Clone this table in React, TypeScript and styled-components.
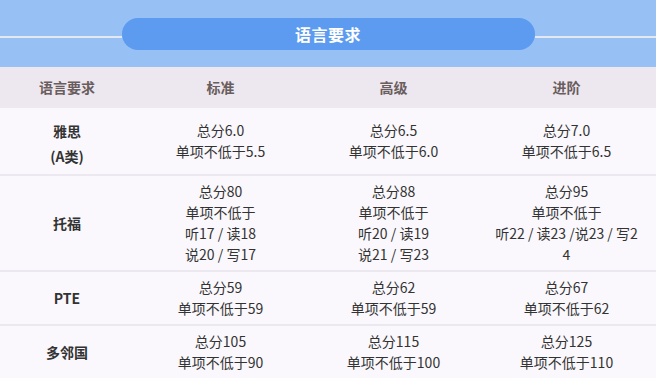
import React from 'react';
import styled, { createGlobalStyle } from 'styled-components';

const GlobalStyle = createGlobalStyle`
	html, body {
		margin: 0;
		padding: 0;
		background: #faf8fc;
		font-family: "Noto Sans CJK SC", "Noto Sans", sans-serif;
		color: #333;
	}
`;

interface Row {
	name: string[];
	cells: string[][];
}

const rows: Row[] = [
	{
		name: ['雅思', '(A类)'],
		cells: [
			['总分6.0', '单项不低于5.5'],
			['总分6.5', '单项不低于6.0'],
			['总分7.0', '单项不低于6.5']
		]
	},
	{
		name: ['托福'],
		cells: [
			['总分80', '单项不低于', '听17 / 读18', '说20 / 写17'],
			['总分88', '单项不低于', '听20 / 读19', '说21 / 写23'],
			['总分95', '单项不低于', '听22 / 读23 /说23 / 写2', '4']
		]
	},
	{
		name: ['PTE'],
		cells: [
			['总分59', '单项不低于59'],
			['总分62', '单项不低于59'],
			['总分67', '单项不低于62']
		]
	},
	{
		name: ['多邻国'],
		cells: [
			['总分105', '单项不低于90'],
			['总分115', '单项不低于100'],
			['总分125', '单项不低于110']
		]
	}
];

const Wrapper = styled.div`
	width: 656px;
	height: 378px;
	overflow: hidden;
	background: #faf8fc;
`;

const Banner = styled.div`
	height: 67px;
	background: #97c0f5;
	display: flex;
	align-items: flex-start;
`;

const Line = styled.div`
	flex: 1;
	height: 2px;
	margin-top: 36px;
	background: #e4e6f0;
`;

const Pill = styled.div`
	width: 413px;
	height: 32px;
	margin-top: 18px;
	border-radius: 16px;
	background: #5c9bef;
	color: #fff;
	font-size: 16px;
	font-weight: 700;
	display: flex;
	align-items: center;
	justify-content: center;
	letter-spacing: 0.5px;
`;

const Grid = styled.div<{ $head?: boolean; $height: number }>`
	display: grid;
	grid-template-columns: 134px 173px 173px 173px;
	height: ${p => p.$height}px;
	background: ${p => (p.$head ? '#ede8f0' : '#faf8fc')};
	border-top: ${p => (p.$head ? 'none' : '2px solid #ebe8ef')};
	box-sizing: border-box;
`;

const HeadCell = styled.div`
	display: flex;
	align-items: center;
	justify-content: center;
	font-size: 14px;
	font-weight: 700;
	color: #6a5d5d;
`;

const NameCell = styled.div<{ $lh: number; $shift: number }>`
	display: flex;
	flex-direction: column;
	align-items: center;
	justify-content: center;
	font-size: 14px;
	font-weight: 700;
	color: #333;
	line-height: ${p => p.$lh}px;
	padding-top: ${p => p.$shift}px;
`;

const Cell = styled.div`
	display: flex;
	flex-direction: column;
	align-items: center;
	justify-content: center;
	font-size: 14px;
	line-height: 21px;
	color: #333;
	white-space: nowrap;
`;

const App = () => (
	<Wrapper>
		<GlobalStyle />
		<Banner>
			<Line />
			<Pill>语言要求</Pill>
			<Line />
		</Banner>
		<Grid $head $height={39}>
			<HeadCell>语言要求</HeadCell>
			<HeadCell>标准</HeadCell>
			<HeadCell>高级</HeadCell>
			<HeadCell>进阶</HeadCell>
		</Grid>
		{rows.map((row, i) => (
			<Grid key={i} $height={i === 0 ? 68 : i === 1 ? 96 : 54}>
				<NameCell $lh={row.name.length > 1 ? 25 : 21} $shift={row.name.length > 1 ? 6 : 0}>
					{row.name.map(n => <span key={n}>{n}</span>)}
				</NameCell>
				{row.cells.map((lines, j) => (
					<Cell key={j}>
						{lines.map((l, k) => <span key={k}>{l}</span>)}
					</Cell>
				))}
			</Grid>
		))}
	</Wrapper>
);

export default App;
